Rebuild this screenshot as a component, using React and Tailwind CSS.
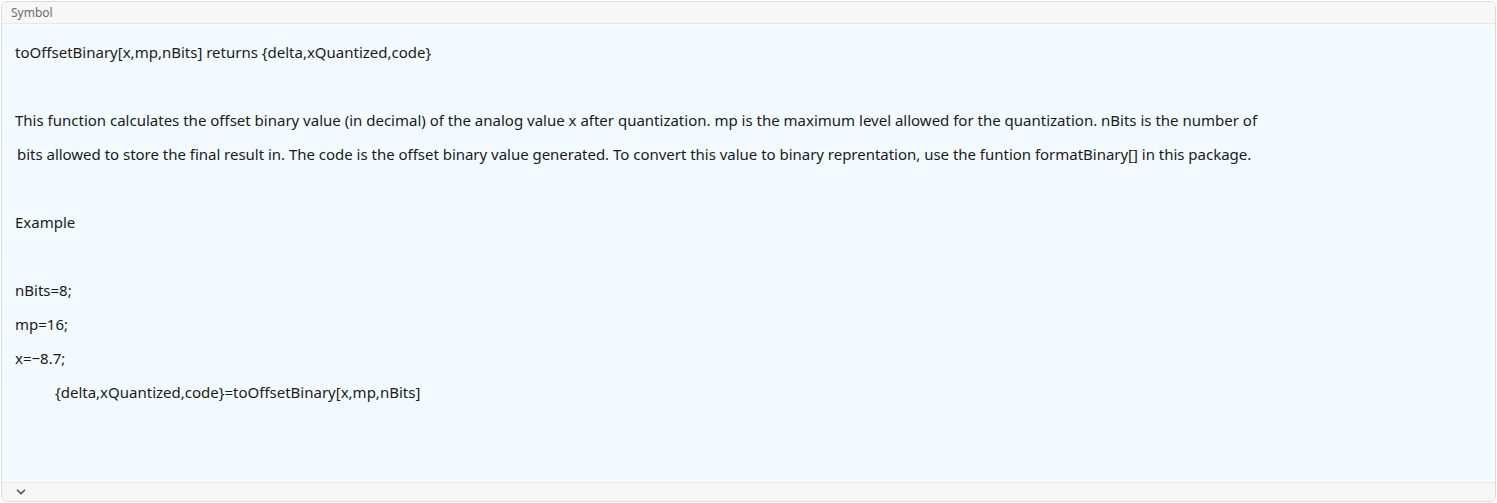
import { ChevronDown } from 'lucide-react';

const lines = [
  { text: "toOffsetBinary[x,mp,nBits] returns {delta,xQuantized,code}" },
  { text: "" },
  { text: "This function calculates the offset binary value (in decimal) of the analog value x after quantization. mp is the maximum level allowed for the quantization. nBits is the number of" },
  { text: "bits allowed to store the final result in. The code is the offset binary value generated. To convert this value to binary reprentation, use the funtion formatBinary[] in this package.", nudge: true },
  { text: "" },
  { text: "Example" },
  { text: "" },
  { text: "nBits=8;" },
  { text: "mp=16;" },
  { text: "x=\u22128.7;" },
  { text: "{delta,xQuantized,code}=toOffsetBinary[x,mp,nBits]", indent: true },
];

export default function App() {
  return (
    <div className="w-[1497px] h-[503px] bg-white p-px font-['Noto_Sans',sans-serif]">
      <div className="flex h-full flex-col overflow-hidden rounded-md border border-[#dadada]">
        {/* header */}
        <div className="flex h-[22px] items-center border-b border-[#e6e9ec] bg-[#f7f7f7] px-[9px] text-[12px] text-[#6b6b6b]">
          Symbol
        </div>

        {/* body */}
        <div className="flex-1 bg-[#f2fafd] px-[13px] pt-[11px] text-[15px] text-[#1a1a1a]">
          {lines.map((l, i) => (
            <div
              key={i}
              className={`h-[34px] leading-[34px] whitespace-pre ${l.indent ? "pl-[40px]" : ""} ${l.nudge ? "pl-[2px] tracking-[-0.02px]" : ""}`}
            >
              {l.text}
            </div>
          ))}
        </div>

        {/* footer */}
        <div className="flex h-[19px] items-center border-t border-[#e8e8e8] bg-[#f6f6f6] px-[12px]">
          <ChevronDown className="h-[14px] w-[14px] text-[#555]" strokeWidth={3} />
        </div>
      </div>
    </div>
  );
}
